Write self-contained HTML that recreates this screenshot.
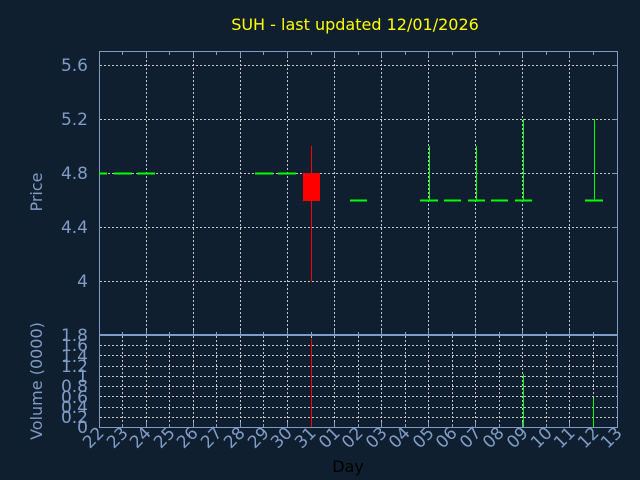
<!DOCTYPE html>
<html><head><style>
html,body{margin:0;padding:0;background:#101f30;}
svg{display:block}
text{font-family:"DejaVu Sans","Liberation Sans",sans-serif;}
</style></head><body>
<svg width="640" height="480" viewBox="0 0 640 480" xmlns="http://www.w3.org/2000/svg">
<rect width="640" height="480" fill="#101f30"/>
<text x="355" y="30" fill="#ffff00" font-size="16" text-anchor="middle">SUH - last updated 12/01/2026</text>
<g stroke="#c8c8c8" stroke-width="1" stroke-dasharray="2,2" fill="none">
<path d="M100 65.5H617M100 119.5H617M100 173.5H617M100 227.5H617M100 281.5H617"/>
<path d="M146.5 52V334M193.5 52V334M240.5 52V334M287.5 52V334M334.5 52V334M381.5 52V334M428.5 52V334M475.5 52V334M522.5 52V334M569.5 52V334"/>
<path d="M100 345.5H617M100 355.5H617M100 366.5H617M100 376.5H617M100 386.5H617M100 396.5H617M100 407.5H617M100 417.5H617"/>
<path d="M122.5 336V427M146.5 336V427M169.5 336V427M193.5 336V427M216.5 336V427M240.5 336V427M263.5 336V427M287.5 336V427M311.5 336V427M334.5 336V427M358.5 336V427M381.5 336V427M405.5 336V427M428.5 336V427M452.5 336V427M475.5 336V427M499.5 336V427M522.5 336V427M546.5 336V427M569.5 336V427M593.5 336V427"/>
</g>
<g stroke="#7f9cc6" stroke-width="1" fill="none">
<rect x="99.5" y="51.5" width="518" height="283"/>
<rect x="99.5" y="335.5" width="518" height="92"/>
<path d="M122.5 52v3M169.5 52v3M216.5 52v3M263.5 52v3M311.5 52v3M358.5 52v3M405.5 52v3M452.5 52v3M499.5 52v3M546.5 52v3M593.5 52v3M146.5 52v5M193.5 52v5M240.5 52v5M287.5 52v5M334.5 52v5M381.5 52v5M428.5 52v5M475.5 52v5M522.5 52v5M569.5 52v5"/>
<path d="M146.5 335v-5M193.5 335v-5M240.5 335v-5M287.5 335v-5M334.5 335v-5M381.5 335v-5M428.5 335v-5M475.5 335v-5M522.5 335v-5M569.5 335v-5M122.5 335v-3M169.5 335v-3M216.5 335v-3M263.5 335v-3M311.5 335v-3M358.5 335v-3M405.5 335v-3M452.5 335v-3M499.5 335v-3M546.5 335v-3M593.5 335v-3"/>
<path d="M122.5 427v-3M146.5 427v-5M169.5 427v-3M193.5 427v-5M216.5 427v-3M240.5 427v-5M263.5 427v-3M287.5 427v-5M311.5 427v-3M334.5 427v-5M358.5 427v-3M381.5 427v-5M405.5 427v-3M428.5 427v-5M452.5 427v-3M475.5 427v-5M499.5 427v-3M522.5 427v-5M546.5 427v-3M569.5 427v-5M593.5 427v-3"/>
<path d="M612 65.5h5M612 119.5h5M612 173.5h5M612 227.5h5M612 281.5h5"/>
</g>
<g stroke="#00ff00" stroke-width="2">
<path d="M99 173.5H107M114 173.5H132M137 173.5H155M255 173.5H273M278 173.5H296"/>
<path d="M350 200.5H367M420 200.5H438M444 200.5H461M468 200.5H485M491 200.5H508M515 200.5H532M585 200.5H603"/>
</g>
<g stroke="#00ff00" stroke-width="1">
<path d="M429.5 146V200M476.5 146V200M523.5 119V200M594.5 119V200"/>
<path d="M523.5 374V427M593.5 398V427"/>
</g>
<path d="M311.5 146V281M311.5 339V427" stroke="#ff0000" stroke-width="1"/>
<rect x="303" y="173" width="17" height="28" fill="#ff0000"/>
<g fill="#7f9cc6" font-size="17" text-anchor="end">
<text x="88" y="71">5.6</text>
<text x="88" y="125">5.2</text>
<text x="88" y="179">4.8</text>
<text x="88" y="233">4.4</text>
<text x="88" y="287">4</text>
<text x="88" y="341">1.8</text>
<text x="88" y="351">1.6</text>
<text x="88" y="362">1.4</text>
<text x="88" y="372">1.2</text>
<text x="88" y="382">1</text>
<text x="88" y="392">0.8</text>
<text x="88" y="403">0.6</text>
<text x="88" y="413">0.4</text>
<text x="88" y="423">0.2</text>
<text x="88" y="433">0</text>
</g>
<text transform="translate(42,192) rotate(-90)" fill="#7f9cc6" font-size="16" text-anchor="middle">Price</text>
<text transform="translate(42,381) rotate(-90)" fill="#7f9cc6" font-size="16" text-anchor="middle">Volume (0000)</text>
<text x="348" y="472" fill="#000000" font-size="16" text-anchor="middle">Day</text>
<g fill="#7f9cc6" font-size="17" text-anchor="end">
<text transform="translate(105,434) rotate(-45)">22</text>
<text transform="translate(129,434) rotate(-45)">23</text>
<text transform="translate(152,434) rotate(-45)">24</text>
<text transform="translate(176,434) rotate(-45)">25</text>
<text transform="translate(199,434) rotate(-45)">26</text>
<text transform="translate(223,434) rotate(-45)">27</text>
<text transform="translate(246,434) rotate(-45)">28</text>
<text transform="translate(270,434) rotate(-45)">29</text>
<text transform="translate(293,434) rotate(-45)">30</text>
<text transform="translate(317,434) rotate(-45)">31</text>
<text transform="translate(341,434) rotate(-45)">01</text>
<text transform="translate(364,434) rotate(-45)">02</text>
<text transform="translate(388,434) rotate(-45)">03</text>
<text transform="translate(411,434) rotate(-45)">04</text>
<text transform="translate(435,434) rotate(-45)">05</text>
<text transform="translate(458,434) rotate(-45)">06</text>
<text transform="translate(482,434) rotate(-45)">07</text>
<text transform="translate(505,434) rotate(-45)">08</text>
<text transform="translate(529,434) rotate(-45)">09</text>
<text transform="translate(553,434) rotate(-45)">10</text>
<text transform="translate(576,434) rotate(-45)">11</text>
<text transform="translate(600,434) rotate(-45)">12</text>
<text transform="translate(623,434) rotate(-45)">13</text>
</g>
</svg>
</body></html>
